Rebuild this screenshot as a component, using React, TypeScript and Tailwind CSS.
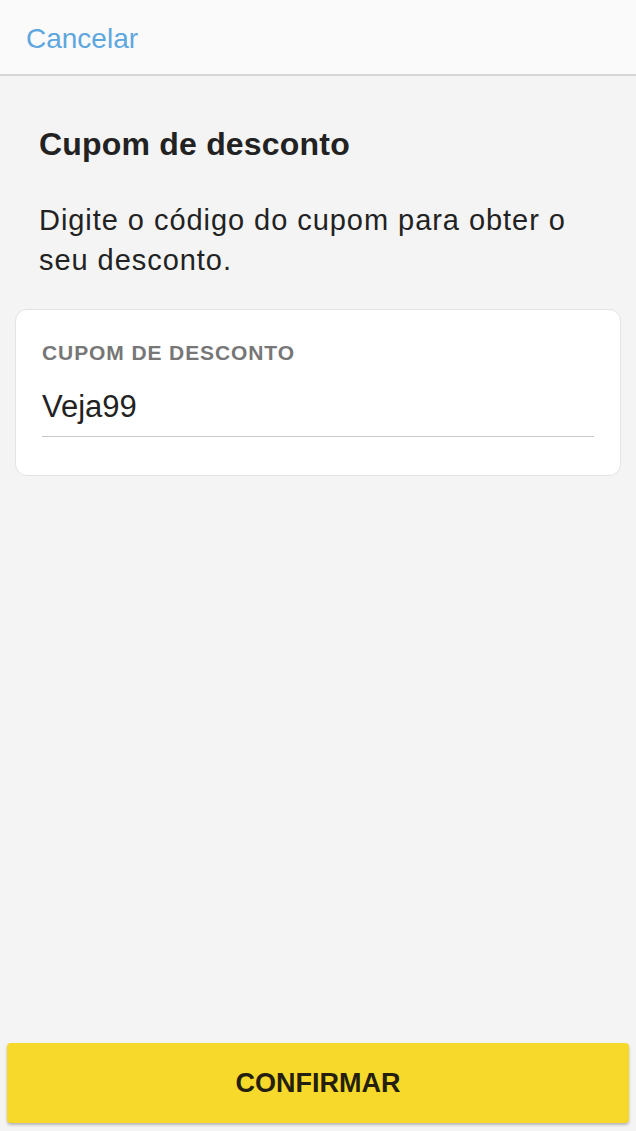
const font = { fontFamily: '"Liberation Sans", Arial, sans-serif' };

export default function App() {
  return (
    <div
      className="flex h-[1131px] w-full flex-col bg-[#f4f4f4] text-[#222]"
      style={font}
    >
      <header className="h-[76px] shrink-0 border-b-2 border-[#d6d6d6] bg-[#fafafa] pl-[26px] pt-[25px]">
        <button className="block text-[28px] leading-[28px] text-[#5ea7de]">
          Cancelar
        </button>
      </header>

      <main className="flex flex-1 flex-col px-[15px] pt-[50px]">
        <h1 className="px-[24px] text-[32px] font-bold leading-[36px] tracking-[0.2px]">
          Cupom de desconto
        </h1>
        <p className="mt-[38px] px-[24px] text-[29px] leading-[40px] tracking-[0.95px] text-[#222]">
          Digite o código do cupom para obter o seu desconto.
        </p>

        <div className="mt-[29px] rounded-[12px] border border-[#e3e3e3] bg-white px-[26px] pb-[38px] pt-[31px]">
          <label className="block text-[21px] font-bold uppercase leading-[24px] tracking-[0.9px] text-[#777]">
            Cupom de desconto
          </label>
          <div className="mt-[25px] border-b border-[#c9c9c9] pb-[12px] text-[31px] leading-[34px]">
            Veja99
          </div>
        </div>
      </main>

      <div className="shrink-0 px-[7px] pb-[8px]">
        <button className="flex h-[80px] w-full items-center justify-center rounded-[4px] bg-[#f7d92b] text-[27px] font-bold leading-none text-[#241f0e] shadow-[0_2px_3px_rgba(0,0,0,0.25)]">
          CONFIRMAR
        </button>
      </div>
    </div>
  );
}
